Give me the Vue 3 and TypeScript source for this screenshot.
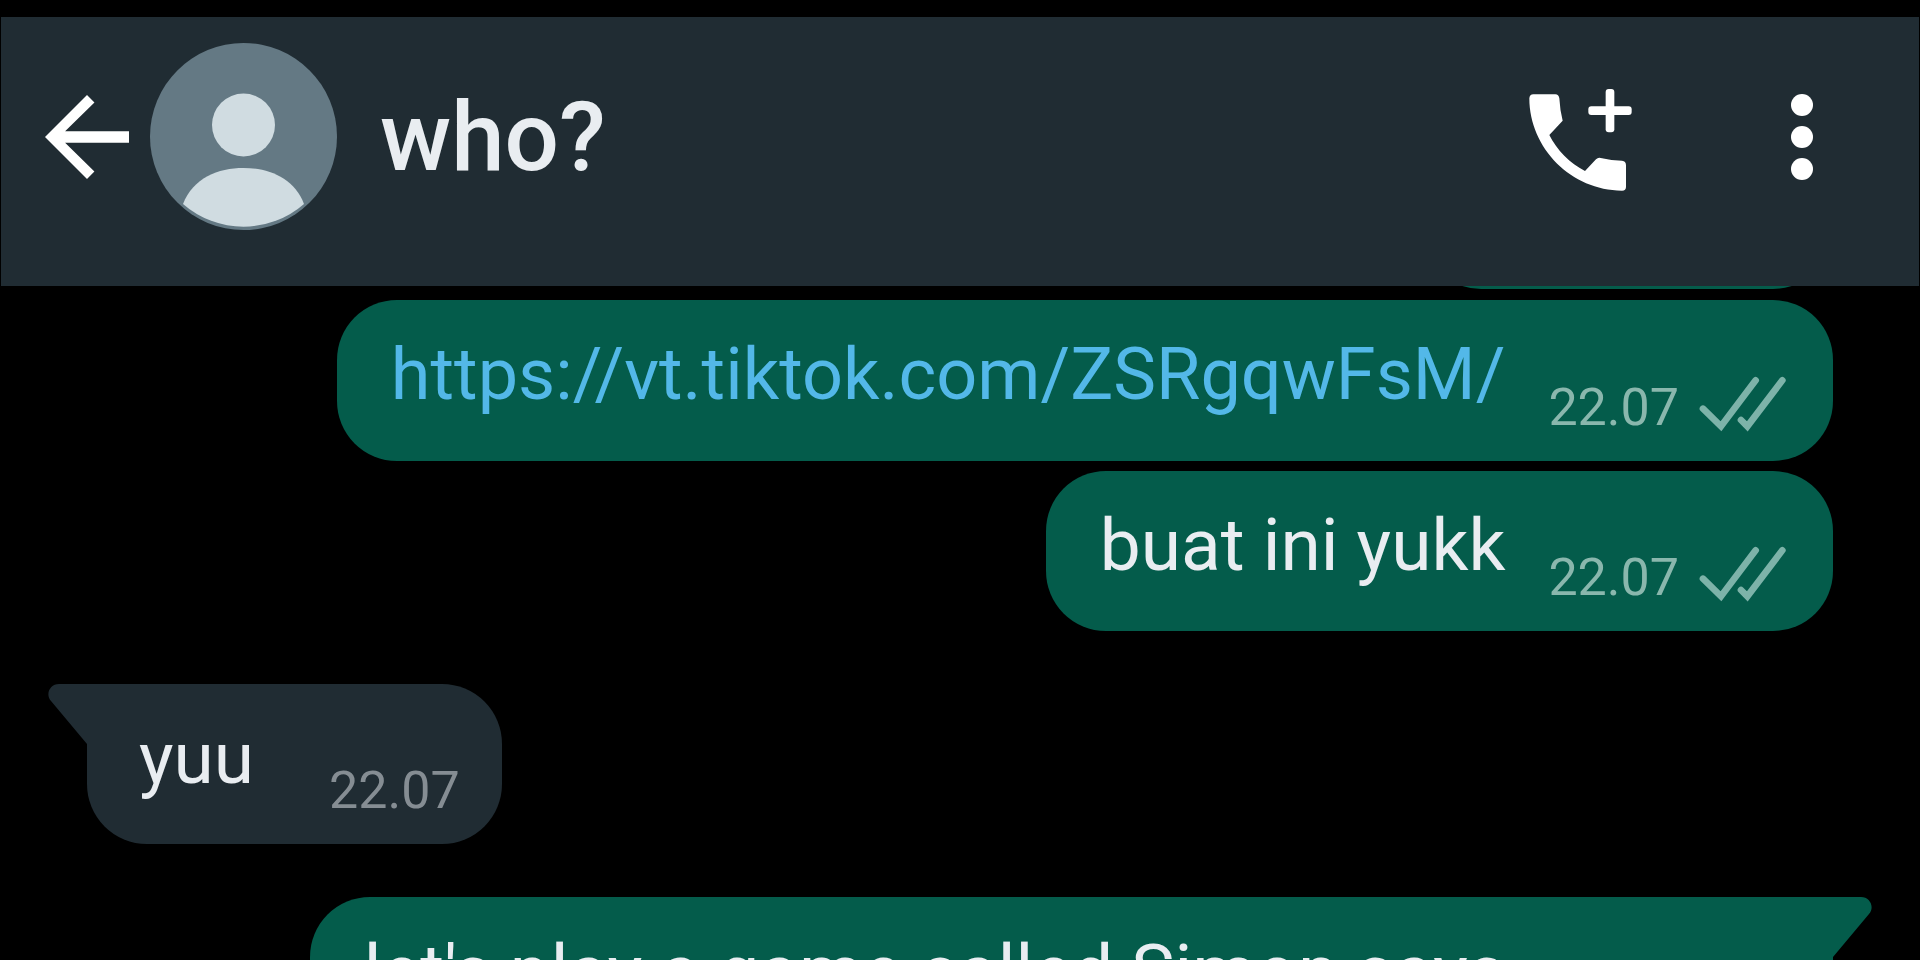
<script setup lang="ts">
interface Message {
  id: number
  text: string
  time: string
  own: boolean
  link?: boolean
  tail?: boolean
}

const contact = 'who?'

const messages: Message[] = [
  { id: 1, text: 'https://vt.tiktok.com/ZSRgqwFsM/', time: '22.07', own: true, link: true },
  { id: 2, text: 'buat ini yukk', time: '22.07', own: true },
  { id: 3, text: 'yuu', time: '22.07', own: false, tail: true },
  { id: 4, text: "let's play a game called Simon says", time: '22.07', own: true, tail: true },
]
</script>

<template>
  <div class="app">
    <header class="bar">
      <button class="icon-button" type="button" aria-label="Back">
        <svg class="back" viewBox="4 4 16 16" aria-hidden="true">
          <path d="M20 10.9H7.83l5.59-5.49L12 4l-8 8 8 8 1.41-1.41L7.83 13.1H20z" />
        </svg>
      </button>
      <svg class="avatar" viewBox="0 0 187 187" aria-hidden="true">
        <circle class="avatar-bg" cx="93.5" cy="93.5" r="93.5" />
        <circle class="avatar-fg" cx="93.5" cy="82" r="31.5" />
        <path class="avatar-fg" d="M33 161C43 135 68 125 93.5 125S144 135 154 161A92 92 0 0 1 33 161Z" />
      </svg>
      <h1 class="name">{{ contact }}</h1>
      <button class="icon-button" type="button" aria-label="Add call">
        <svg class="call" viewBox="258 246 330 330" aria-hidden="true">
          <path
            d="M280 283H346Q356 283 358 295Q360 332 368 362L328 405C350 450 390 490 435 513L468 478Q474 472 482 474Q515 482 546 482Q558 483 558 496V561Q558 572 546 572C395 572 268 445 268 295Q269 283 280 283Z"
          />
          <rect x="497" y="267" width="26" height="130" rx="9" />
          <rect x="445" y="319" width="130" height="26" rx="9" />
        </svg>
      </button>
      <button class="icon-button" type="button" aria-label="More options">
        <svg class="more" viewBox="0 0 24 88" aria-hidden="true">
          <circle cx="12" cy="12" r="11" />
          <circle cx="12" cy="44" r="11" />
          <circle cx="12" cy="76" r="11" />
        </svg>
      </button>
    </header>

    <main class="chat">
      <!-- Lower edge of the message scrolled beneath the header -->
      <div class="scrolled" aria-hidden="true"><div class="scrolled-bubble"></div></div>

      <article
        v-for="m in messages"
        :key="m.id"
        class="bubble"
        :class="{ own: m.own, other: !m.own, tailed: m.tail }"
      >
        <svg v-if="m.tail" class="tail" viewBox="0 0 39 60" aria-hidden="true">
          <path v-if="m.own" d="M0 0H28C37 0 42 10 36 17L0 60Z" />
          <path v-else d="M39 0H11C2 0 -3 10 3 17L39 60Z" />
        </svg>
        <p class="text">
          <a v-if="m.link" class="link" :href="m.text">{{ m.text }}</a>
          <template v-else>{{ m.text }}</template>
        </p>
        <time class="time">{{ m.time }}</time>
        <svg v-if="m.own" class="ticks" viewBox="598 288 264 168" role="img" aria-label="Delivered">
          <path d="M610 386L664 439L768 301M724 420L743 439L848 301" />
        </svg>
      </article>
    </main>
  </div>
</template>

<style>
body {
  margin: 0;
  background: #000;
}
</style>

<style scoped>
.app {
  box-sizing: border-box;
  height: 100vh;
  padding-top: 17px;
  display: flex;
  flex-direction: column;
  overflow: hidden;
  background: #000;
  color: #e9edf1;
  font-family: Roboto, "Liberation Sans", sans-serif;
}

.bar {
  flex: none;
  display: flex;
  align-items: center;
  margin: 0 1px;
  padding: 26px 105px 56px 44px;
  background: #202c33;
}

.icon-button {
  flex: none;
  padding: 0;
  border: 0;
  background: none;
  cursor: pointer;
}

.icon-button svg {
  display: block;
  fill: #fff;
}

.back {
  width: 84px;
  height: 84px;
}

.avatar {
  flex: none;
  width: 187px;
  height: 187px;
  margin-left: 21px;
}

.avatar-bg {
  fill: #647984;
}

.avatar-fg {
  fill: #d0dce1;
}

.name {
  flex: 1;
  margin: 0 0 0 43px;
  font-size: 96px;
  line-height: 112px;
  font-weight: 500;
}

.call {
  width: 110px;
  height: 110px;
}

.more {
  width: 24px;
  height: 88px;
  margin-left: 154px;
}

.chat {
  flex: 1;
  min-height: 0;
  display: flex;
  flex-direction: column;
  padding: 0 87px;
  overflow: hidden;
}

.scrolled {
  flex: none;
  align-self: flex-end;
  display: flex;
  align-items: flex-end;
  height: 3px;
  margin-bottom: 1px;
  overflow: hidden;
}

.scrolled-bubble {
  width: 412px;
  height: 160px;
  border-radius: 60px;
  background: #045c4b;
}

.bubble {
  flex: none;
  position: relative;
  display: flex;
  align-items: flex-end;
  margin-top: 10px;
  padding: 0 46px 0 54px;
  border-radius: 60px;
}

.tailed {
  margin-top: 53px;
}

.own {
  align-self: flex-end;
  background: #045c4b;
}

.other {
  align-self: flex-start;
  padding: 0 42px 0 52px;
  background: #202c33;
}

.own.tailed {
  border-top-right-radius: 0;
}

.other.tailed {
  border-top-left-radius: 0;
}

.tail {
  position: absolute;
  top: 0;
  width: 39px;
  height: 60px;
}

.own .tail {
  left: 100%;
  fill: #045c4b;
}

.other .tail {
  right: 100%;
  fill: #202c33;
}

.text {
  margin: 0;
  padding: 32px 0 44px;
  font-size: 73px;
  line-height: 84px;
  white-space: nowrap;
}

.link {
  font-size: 72px;
  color: #53b8e8;
  text-decoration: none;
}

.time {
  margin: 0 0 21px 43px;
  font-size: 52px;
  line-height: 64px;
  color: #8ab7ad;
}

.other .time {
  margin-left: 75px;
  color: #858d93;
}

.ticks {
  width: 88px;
  height: 56px;
  margin: 0 0 29px 20px;
  fill: none;
  stroke: #7db3a9;
  stroke-width: 20;
  stroke-linecap: round;
}
</style>
